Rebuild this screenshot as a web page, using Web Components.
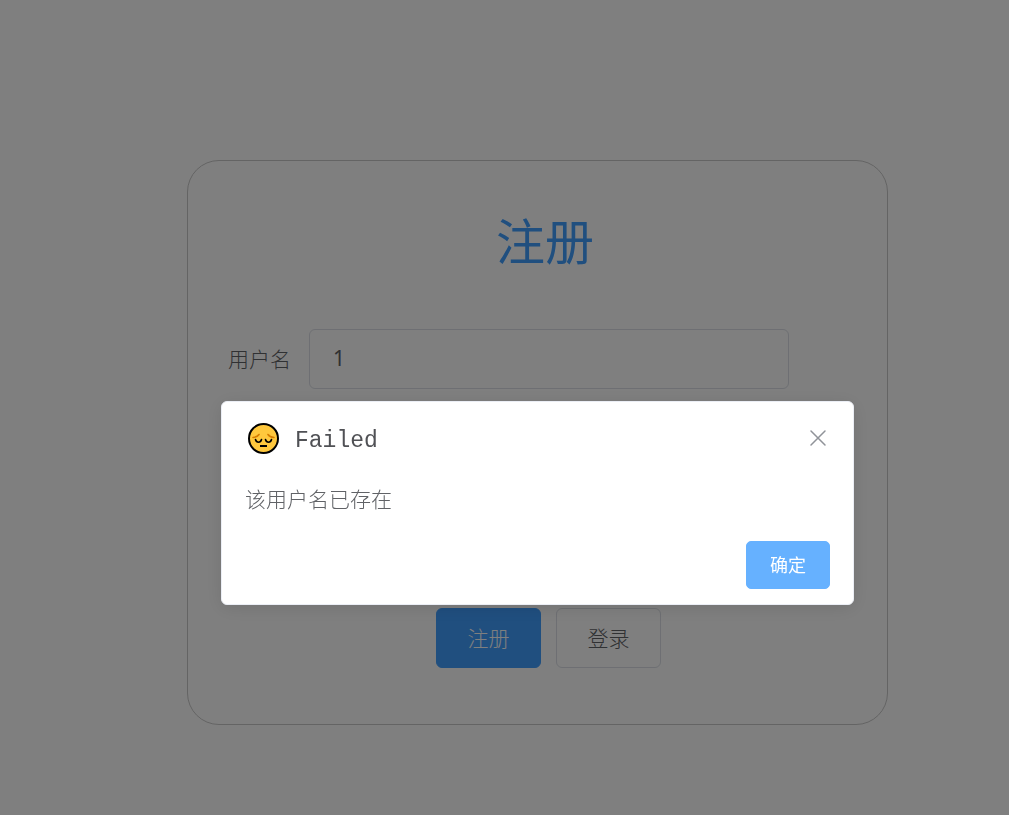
<!DOCTYPE html>
<html lang="zh-CN">
<head>
<meta charset="utf-8">
<meta name="viewport" content="width=device-width, initial-scale=1">
<title>注册</title>
<style>
body {
  margin: 0;
  background: #fff;
  font-family: "Noto Sans CJK SC", sans-serif;
  font-weight: 300;
  color: #606266;
  --offset: 66px;
}
</style>
</head>
<body>
<register-page></register-page>
<message-dialog heading="Failed">该用户名已存在</message-dialog>

<script>
function attach(el, html) {
  const t = document.createElement('template');
  t.innerHTML = html;
  el.attachShadow({ mode: 'open' }).appendChild(t.content.cloneNode(true));
  return el.shadowRoot;
}

customElements.define('ui-button', class extends HTMLElement {
  constructor() {
    super();
    attach(this, `
      <style>
        :host { display: inline-block; }
        button {
          display: block; box-sizing: border-box; height: 60px; min-width: 105px; padding: 0 24px 2px;
          border: 1px solid #dcdfe6; border-radius: 6px; background: #fff; color: #606266;
          font: inherit; font-size: 21px; line-height: 24px; white-space: nowrap; cursor: pointer;
        }
        :host([primary]) button { background: #409eff; border-color: #409eff; color: #fff; }
        :host([hovered]) button { background: #66b1ff; border-color: #66b1ff; }
        :host([small]) button {
          height: 48px; min-width: 84px; padding: 0 20px 2px; font-size: 18px; font-weight: 400; border-radius: 5px;
        }
      </style>
      <button type="button"><slot></slot></button>`);
  }
});

customElements.define('form-field', class extends HTMLElement {
  constructor() {
    super();
    const root = attach(this, `
      <style>
        :host { display: flex; align-items: center; gap: 18px; }
        label { flex: none; padding-bottom: 2px; font-size: 21px; line-height: 58px; }
        input {
          flex: 1; min-width: 0; box-sizing: border-box; height: 60px; padding: 0 23px 2px;
          border: 1px solid #dcdfe6; border-radius: 6px; background: #fff; color: #606266;
          font-family: "Noto Sans", sans-serif; font-weight: 400; font-size: 21px; outline: none;
        }
      </style>
      <label for="field"></label><input id="field" type="text">`);
    root.querySelector('label').textContent = this.getAttribute('label');
    root.querySelector('input').value = this.getAttribute('value');
  }
});

customElements.define('register-page', class extends HTMLElement {
  constructor() {
    super();
    attach(this, `
      <style>
        :host { display: flex; justify-content: center; padding: 160px 0 90px var(--offset); }
        main {
          box-sizing: border-box; width: 100%; max-width: 701px; padding: 38px 98px 56px 40px;
          border: 1px solid #c8c8c8; border-radius: 32px;
        }
        h1 {
          margin: 0 -73px 50px 0; text-align: center;
          color: #409eff; font-weight: 400; font-size: 49px; line-height: 80px;
        }
        .actions { display: flex; justify-content: center; gap: 15px; margin: 219px 0 0 80px; }
      </style>
      <main>
        <h1>注册</h1>
        <form-field label="用户名" value="1"></form-field>
        <div class="actions"><ui-button primary>注册</ui-button><ui-button>登录</ui-button></div>
      </main>`);
  }
});

customElements.define('message-dialog', class extends HTMLElement {
  constructor() {
    super();
    const root = attach(this, `
      <style>
        :host {
          position: fixed; inset: 0; display: flex; align-items: flex-start; justify-content: center;
          padding: 401px 0 0 var(--offset); background: rgba(0, 0, 0, .5);
        }
        section {
          box-sizing: border-box; width: 100%; max-width: 633px; padding: 14px 23px 15px;
          border: 1px solid #ebeef5; border-radius: 6px; background: #fff;
          box-shadow: 0 3px 18px rgba(0, 0, 0, .1);
        }
        header { display: flex; align-items: center; height: 44px; }
        .face { flex: none; width: 36px; height: 36px; }
        h2 {
          flex: 1; margin: 0 0 0 14px; padding-top: 6px; color: #505155;
          font-family: "Liberation Mono", monospace; font-weight: 400; font-size: 23px; line-height: 36px;
        }
        .close { display: block; padding: 0; border: 0; background: none; color: #909399; cursor: pointer; }
        .close svg { display: block; width: 24px; height: 24px; }
        p { margin: 20px 0 25px; font-size: 21px; line-height: 36px; }
        footer { display: flex; justify-content: flex-end; }
      </style>
      <section role="dialog" aria-modal="true" aria-labelledby="title">
        <header>
          <svg class="face" viewBox="0 0 36 36" aria-hidden="true">
            <circle cx="18.500" cy="18.500" r="14.500" fill="#ffc83d" stroke="#000" stroke-width="2"/>
            <path d="M8 17.500q4.500-.5 6-3M29 17.500q-4.500-.5-6-3" fill="none" stroke="#d67d00" stroke-width="1.600" stroke-linecap="round"/>
            <path d="M10.500 19.500q.7 2.700 3 2.700t3-2.700M20.500 19.500q.7 2.700 3 2.700t3-2.700" fill="none" stroke="#000" stroke-width="1.600" stroke-linecap="round"/>
            <path d="M15 26h7" stroke="#000" stroke-width="2"/>
          </svg>
          <h2 id="title"></h2>
          <button class="close" type="button" aria-labelledby="title">
            <svg viewBox="0 0 24 24" aria-hidden="true"><path d="M5 5l14 14M19 5L5 19" fill="none" stroke="currentColor" stroke-width="1.500" stroke-linecap="round"/></svg>
          </button>
        </header>
        <p><slot></slot></p>
        <footer><ui-button primary hovered small>确定</ui-button></footer>
      </section>`);
    root.querySelector('h2').textContent = this.getAttribute('heading');
  }
});
</script>
</body>
</html>
